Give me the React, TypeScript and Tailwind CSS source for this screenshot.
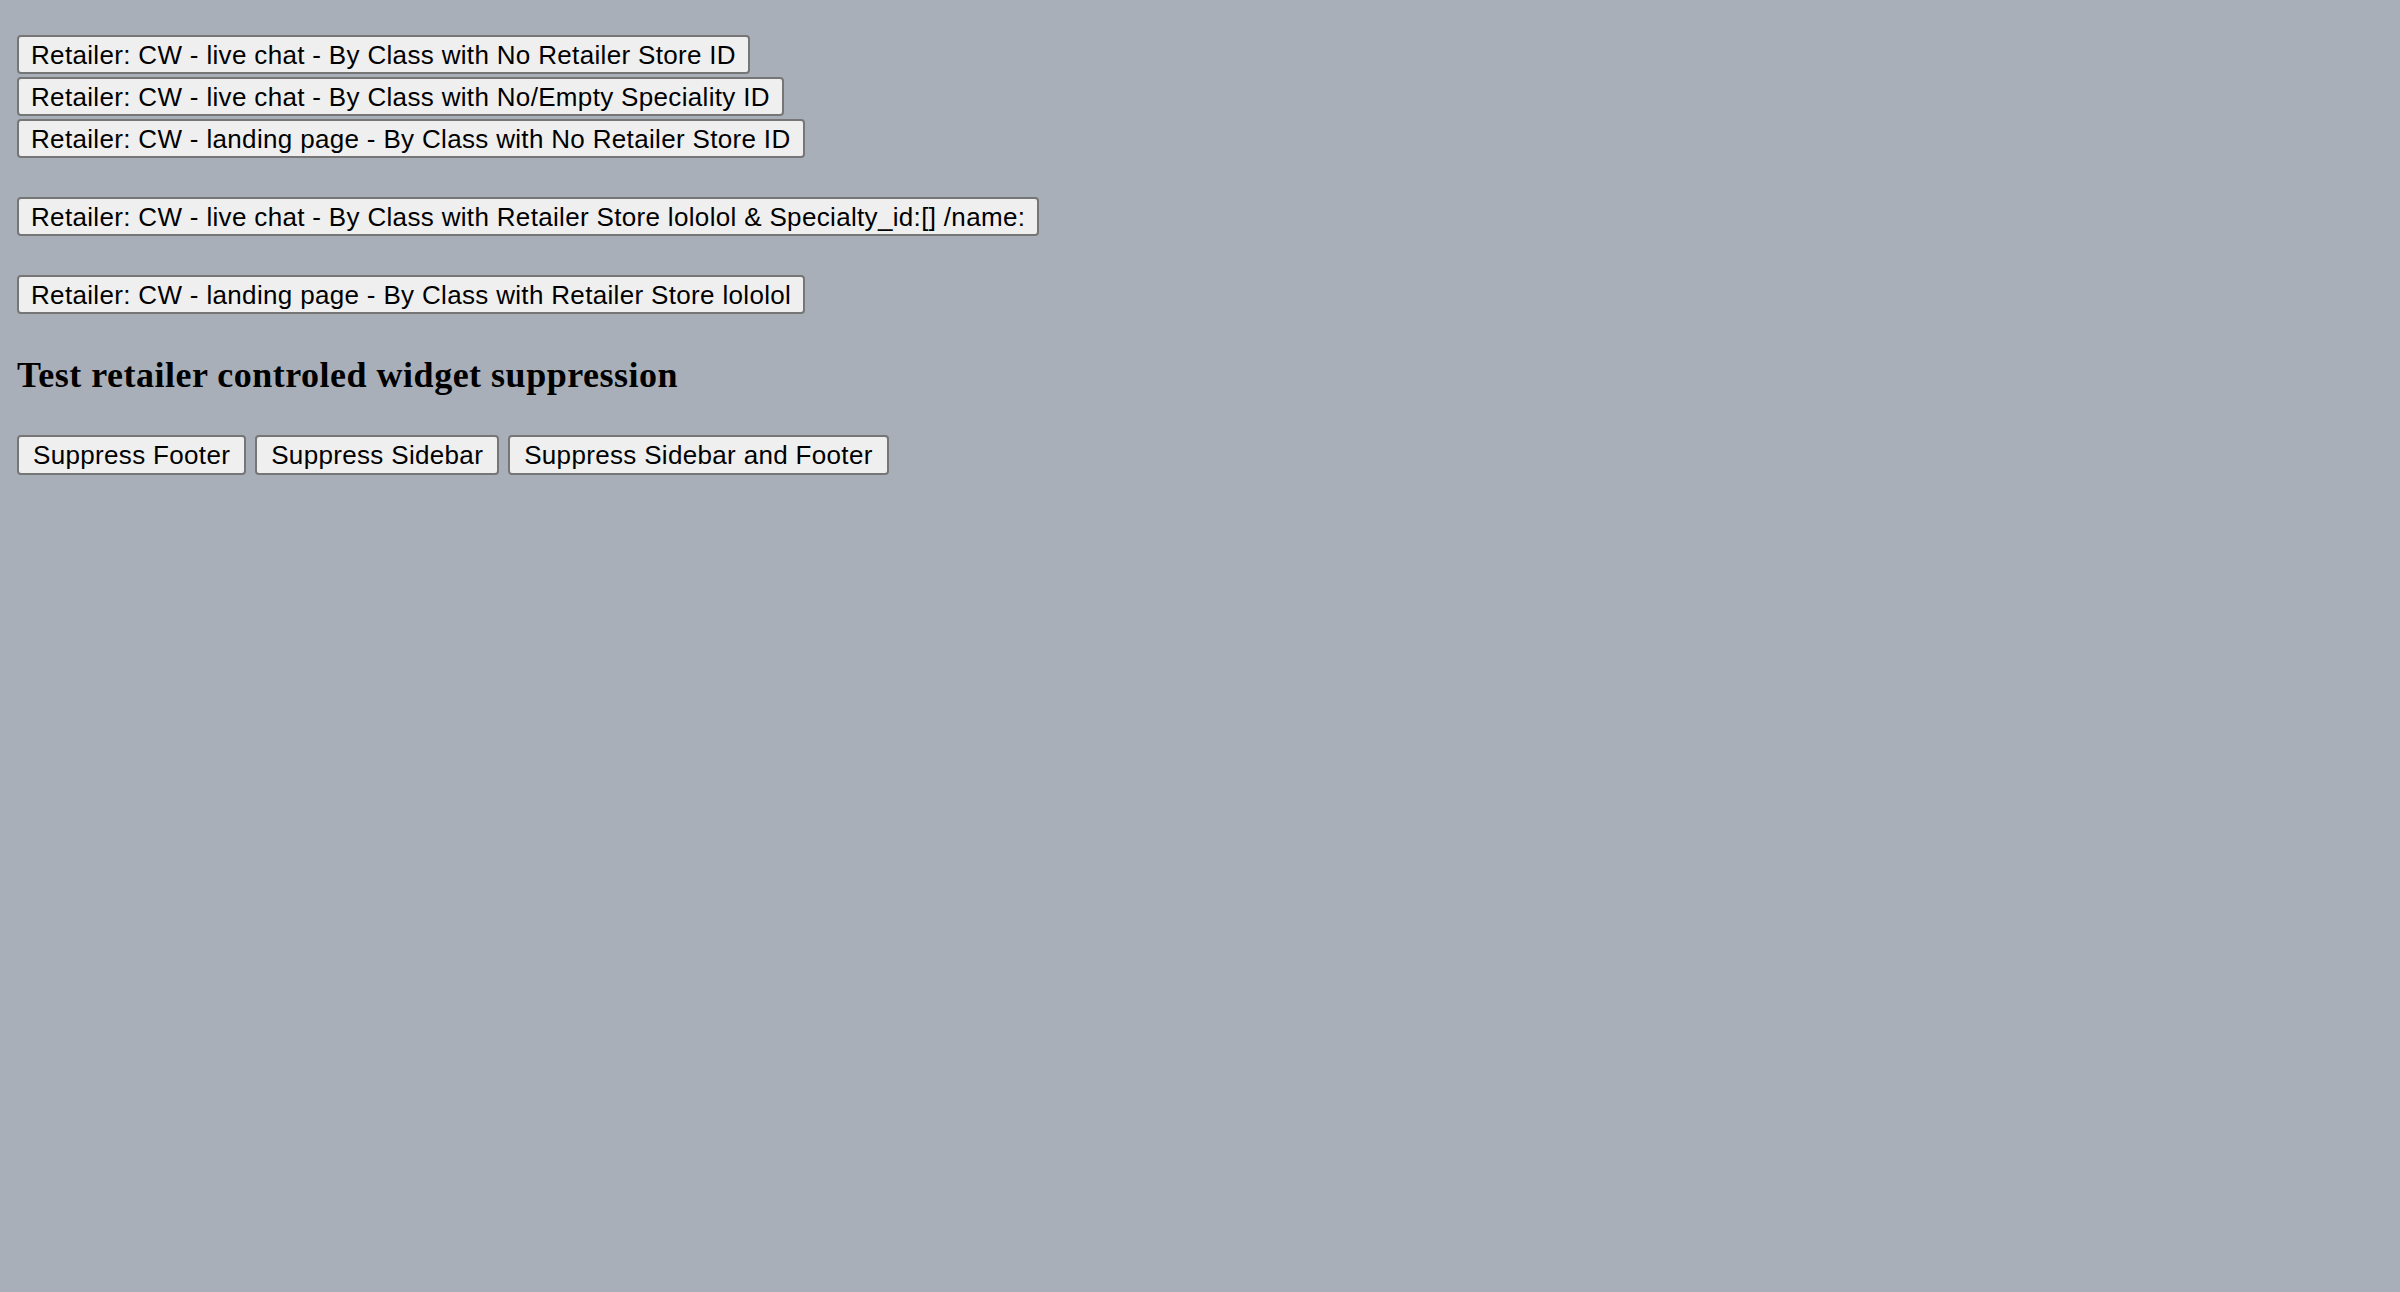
const btn =
  'h-[39px] rounded-[4px] border-2 border-[#767676] bg-[#efefef] px-[12px] text-[26px] leading-[30px] tracking-[0.33px] text-black whitespace-nowrap';

const smallBtn =
  'h-[40px] rounded-[4px] border-2 border-[#767676] bg-[#efefef] px-[14px] text-[26px] leading-[30px] tracking-[0.33px] text-black whitespace-nowrap';

export default function App() {
  return (
    <div className="min-h-[1292px] w-full bg-[#a8afb9] px-[17px] pt-[35px] font-['Liberation_Sans',Arial,sans-serif]">
      <div className="flex flex-col items-start gap-[3px]">
        <button className={btn}>Retailer: CW - live chat - By Class with No Retailer Store ID</button>
        <button className={btn}>Retailer: CW - live chat - By Class with No/Empty Speciality ID</button>
        <button className={btn}>Retailer: CW - landing page - By Class with No Retailer Store ID</button>
      </div>

      <div className="mt-[39px] flex flex-col items-start gap-[39px]">
        <button className={btn}>Retailer: CW - live chat - By Class with Retailer Store lololol &amp; Specialty_id:[] /name:</button>
        <button className={btn}>Retailer: CW - landing page - By Class with Retailer Store lololol</button>
      </div>

      <h2 className="mt-[40px] font-['Liberation_Serif','Times_New_Roman',serif] text-[36px] font-bold leading-[42px] tracking-[0.5px] text-black">
        Test retailer controled widget suppression
      </h2>

      <div className="mt-[39px] flex items-start gap-[9px]">
        <button className={smallBtn}>Suppress Footer</button>
        <button className={smallBtn}>Suppress Sidebar</button>
        <button className={smallBtn}>Suppress Sidebar and Footer</button>
      </div>
    </div>
  );
}
